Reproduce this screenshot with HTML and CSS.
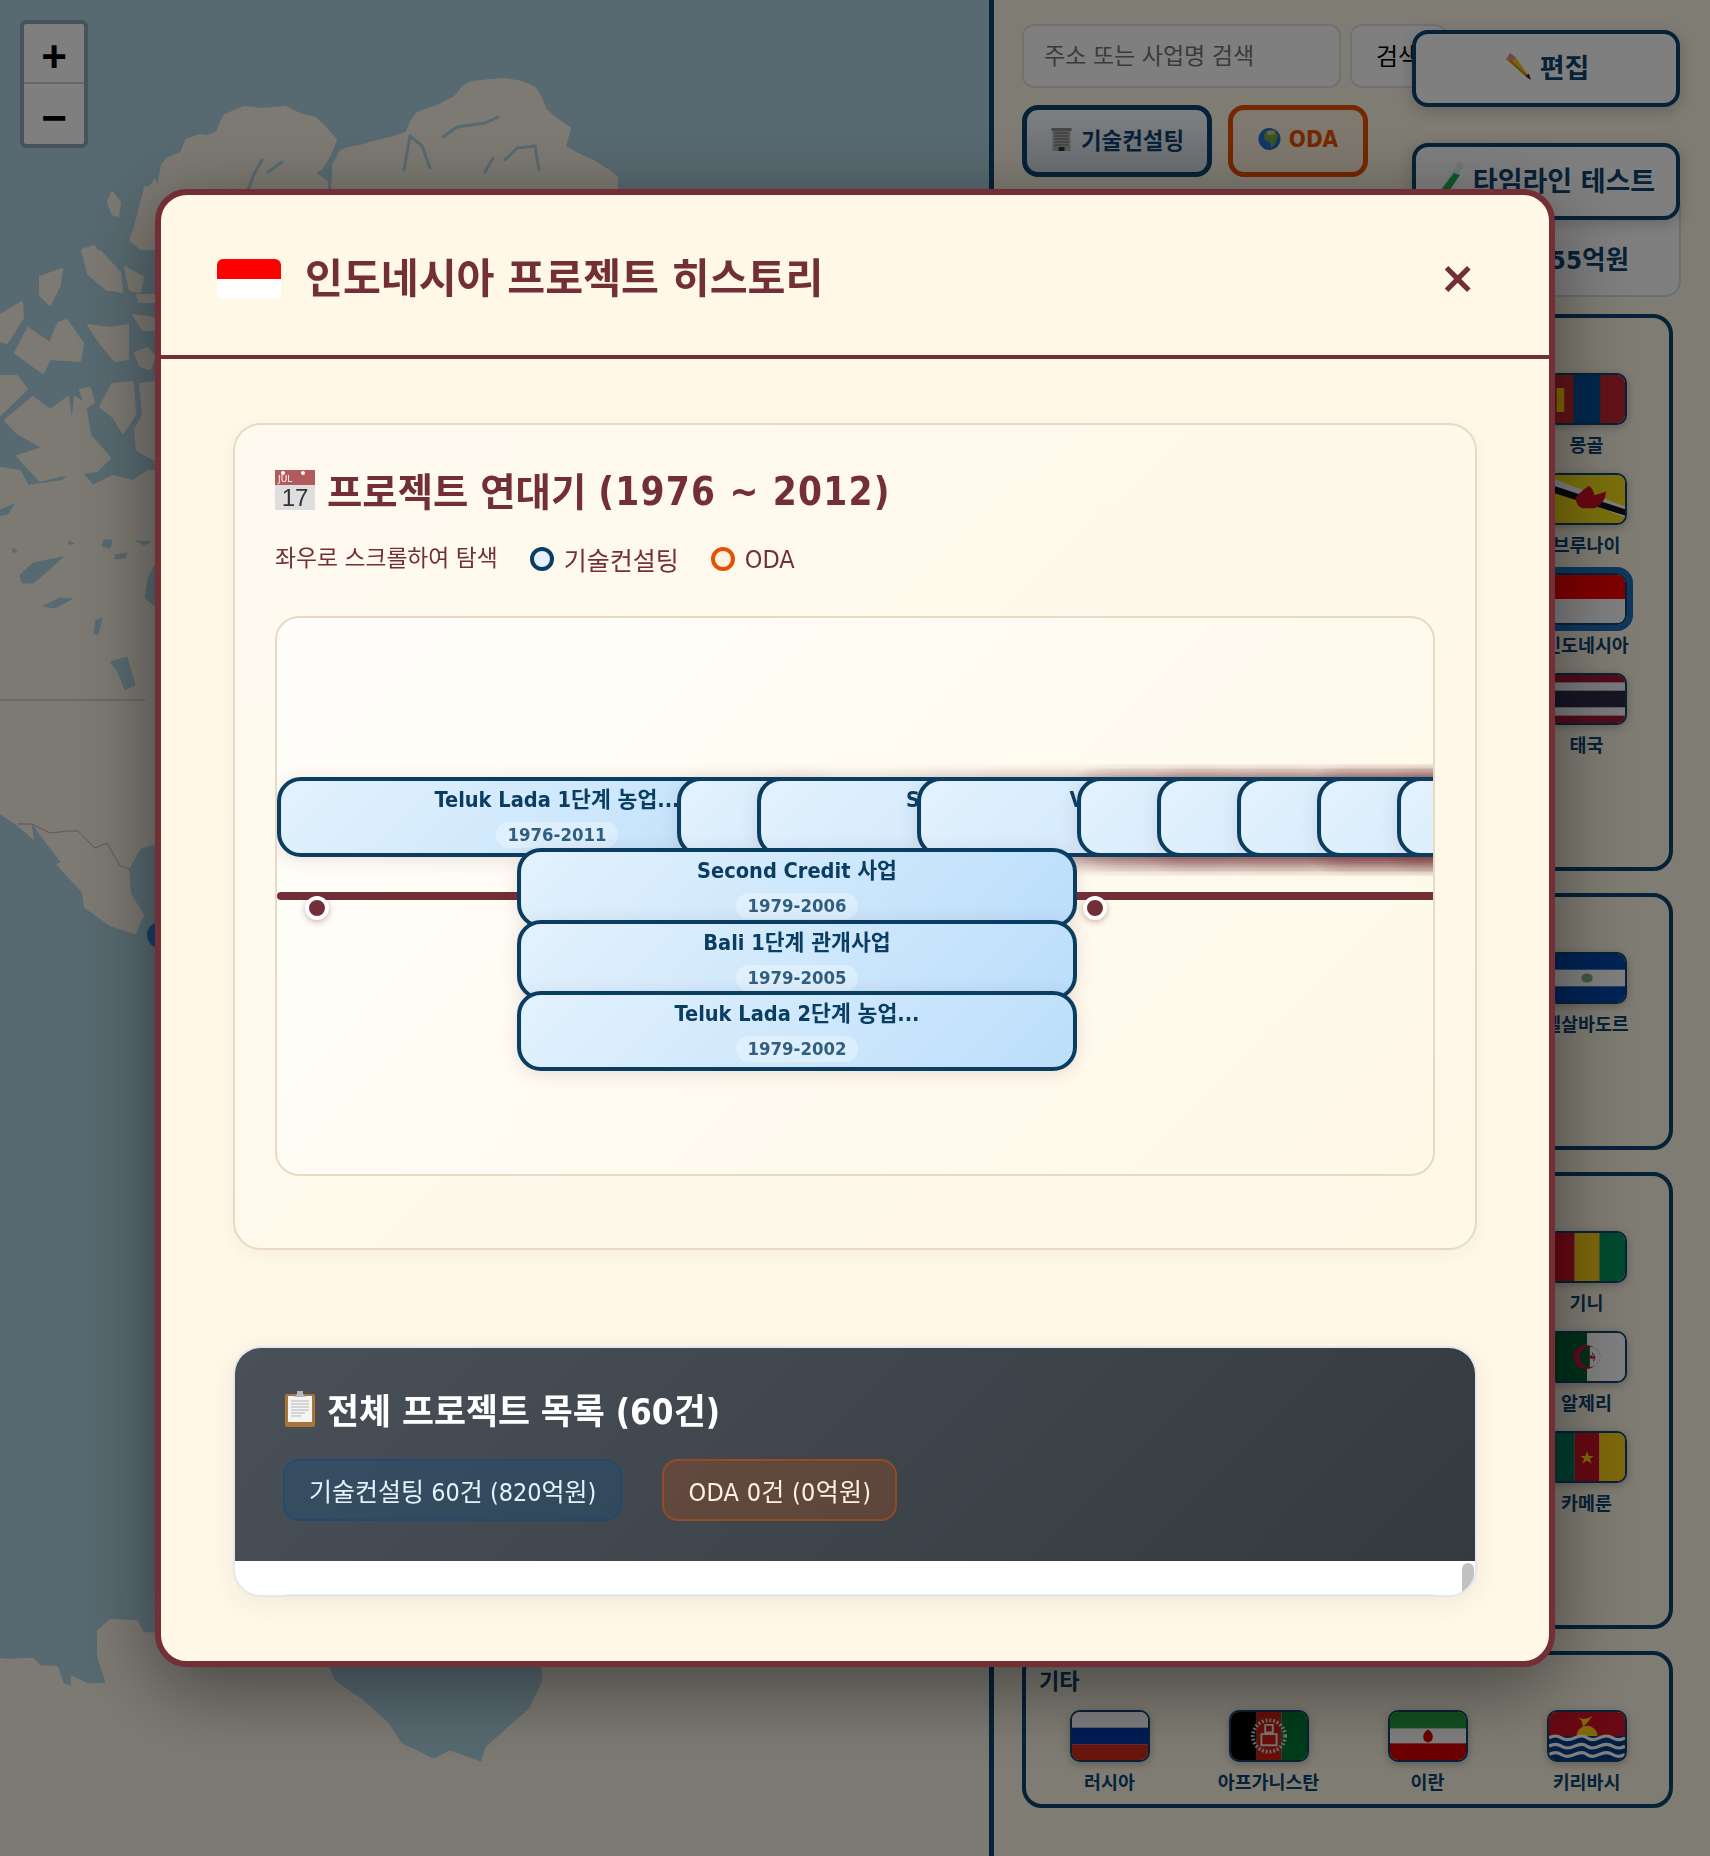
FILE: index.html
```html
<!DOCTYPE html>
<html lang="ko">
<head>
<meta charset="utf-8">
<title>인도네시아 프로젝트 히스토리</title>
<link rel="stylesheet" href="styles.css">
</head>
<body>
<div class="app">
  <div class="map">
    <svg class="map-art" viewBox="0 0 989 1856" aria-hidden="true">
      <g class="land">
        <path d="M162 165L168 158 181 153 186 140 200 135 208 136 217 132 222 120 225 115 244 107 262 109 285 107 300 114 315 118 326 128 336 140 329 157 322 168 315 173 325 180 332 187 340 230 150 230Z"/>
        <path d="M332 167L340 152 348 148 360 146 373 142 390 138 406 133 412 120 417 113 437 106 455 97 464 86 472 82 490 80 505 79 522 82 535 88 541 98 546 110 558 120 570 128 565 147 580 155 595 162 608 170 617 177 617 230 329 230Z"/>
        <path d="M145 187L165 190 165 240 156 233 142 250 130 240 140 215Z"/>
        <path d="M112 192l8 10-2 14-6-2-4-12zM82 250l12-4 12 18 14 8 2 20-18-4-18-24z"/>
        <path d="M135 226L143 195 155 180 175 249 143 249Z"/>
        <path d="M83 251L100 251 117 269 120 290 107 290 88 274Z"/>
        <path d="M40 277L62 269 60 285 50 305 40 295ZM0 315L22 302 23 318 7 343 0 341ZM15 353L28 328 50 343 58 323 67 320 83 343 80 361 50 359 43 373 33 366Z"/>
        <path d="M88 325L110 328 128 325 128 359 115 361 100 343ZM125 267L143 277 140 292 130 290ZM137 295h18v7h-16ZM133 315L155 318 155 330 143 330ZM135 353L147 348 155 356 150 369 140 366Z"/>
        <path d="M100 407L112 384 133 382 135 415 123 433 113 417ZM140 384L175 379 175 471 137 450 135 430 143 415Z"/>
        <path d="M5 420L33 397 50 410 68 397 72 425 75 397 85 404 90 435 110 458 97 471 60 476 40 481 17 456 43 448 17 433Z"/>
        <path d="M0 376L17 376 27 389 0 415ZM80 390l10-2 4 14-8 6z"/>
        <path d="M0 468L20 471 28 486 63 481 77 468 93 486 113 476 133 481 148 471 175 471 175 843 155 843 140 848 128 869 130 894 143 915 135 933 110 925 85 907 83 892 57 864 42 845 33 838 18 825 0 813Z"/>
        <path d="M0 1659L10 1660 20 1659 33 1659 40 1666 57 1667 63 1684 72 1687 72 1677 87 1684 107 1684 98 1656 98 1631 110 1620 137 1621 143 1633 175 1634 989 1634 989 1856 0 1856Z"/>
      </g>
      <g class="water">
        <path d="M20 575L33 563 63 557 43 575 33 583 22 583ZM43 606L60 598 72 599 55 608ZM145 598L148 578 155 565 175 565 175 606 155 606ZM110 662L127 657 135 685 125 690 118 672ZM96 620l6-2-4 16-4 0zM104 540l8 0-2 8-8-2zM115 555l12-2-2 5-10 1zM136 541l14 1-6 3zM13 548l4 3-4 2zM0 510l14-6-6 10-8 2zM70 541l4 3-6 0zM32 824l5 8 23 30-5 2-20-22zM330 1667L335 1680 364 1700 389 1723 402 1743 434 1758 450 1750 481 1761 485 1747 504 1730 529 1708 542 1680 539 1640 330 1640Z"/>
      </g>
      <path class="channel" d="M248 190l6-16 8-14M268 172l14-10M404 170l6-34 12 10 8 22M443 137l14-10 28-4 13-6M505 160l12-12 18-2 4 24M485 172l8-14M331 166l-2 30"/>
      <path class="border-line" d="M0 700H145M18 824H32L50 833 68 831 78 831 95 848 107 843 120 866 130 869"/>
      <circle class="marker" cx="160" cy="935" r="13"/>
    </svg>
    <div class="zoom-control">
      <div class="zoom-btn zoom-in">+</div>
      <div class="zoom-btn">−</div>
    </div>
  </div>

  <aside class="side">
    <div class="search-row">
      <div class="search-input">주소 또는 사업명 검색</div>
      <div class="search-btn">검색</div>
    </div>
    <div class="filter-row">
      <div class="filter filter-tech">
        <svg class="ico-sm" viewBox="0 0 22 24"><rect x="2" y="2" width="18" height="22" fill="#b4b4b4"/><rect x="1" y="1" width="20" height="3" fill="#8c8c8c"/><path d="M4 6h14M4 9h14M4 12h14M4 15h14M4 18h14" stroke="#6a6a6a" stroke-width="1.2"/><rect x="8" y="20" width="6" height="4" fill="#333"/></svg>
        기술컨설팅
      </div>
      <div class="filter filter-oda">
        <svg class="ico-sm" viewBox="0 0 24 24"><circle cx="12" cy="12" r="11.5" fill="#1f6fd0"/><path d="M9 3l8-1 4 6-3 9-4 5-2-7-5-2-1-5z" fill="#6ea843"/><path d="M10 4l6-1 2 4-8 1z" fill="#e3c98c"/></svg>
        ODA
      </div>
    </div>
    <div class="stat"><span class="stat-value">655억원</span></div>
    <div class="regions">
      <section class="region">
        <h3 class="region-title">아시아</h3>
        <div class="flags">
          <div class="cell col-4"><svg class="flag" viewBox="0 0 80 52" preserveAspectRatio="none"><rect width="80" height="52" fill="#c4272f"/><rect x="26" width="28" height="52" fill="#015197"/><path d="M8 14h8v26H8z" fill="#f9cf02"/></svg><span class="cell-label">몽골</span></div>
          <div class="cell col-4"><svg class="flag" viewBox="0 0 80 52" preserveAspectRatio="none"><rect width="80" height="52" fill="#f7e017"/><path d="M0 2L80 34V46L0 14Z" fill="#fff"/><path d="M0 10L80 37V44L0 18Z" fill="#111"/><path d="M28 24q10-10 14-12 4 2 6 10l12-4q0 12-12 18H36Q28 34 28 24z" fill="#cf1126"/></svg><span class="cell-label">브루나이</span></div>
          <div class="cell col-4 selected"><svg class="flag" viewBox="0 0 80 52" preserveAspectRatio="none"><rect width="80" height="26" fill="#f00"/><rect y="26" width="80" height="26" fill="#fff"/></svg><span class="cell-label">인도네시아</span></div>
          <div class="cell col-4"><svg class="flag" viewBox="0 0 80 52" preserveAspectRatio="none"><rect width="80" height="52" fill="#a51931"/><rect y="8" width="80" height="36" fill="#f4f5f8"/><rect y="17" width="80" height="18" fill="#2d2a4a"/></svg><span class="cell-label">태국</span></div>
          <div class="row-spacer"></div>
        </div>
      </section>
      <section class="region">
        <h3 class="region-title">중남미</h3>
        <div class="flags">
          <div class="cell col-4"><svg class="flag" viewBox="0 0 80 52" preserveAspectRatio="none"><rect width="80" height="52" fill="#0047ab"/><rect y="17" width="80" height="18" fill="#fff"/><ellipse cx="40" cy="26" rx="6" ry="5" fill="#7fb08a"/></svg><span class="cell-label">엘살바도르</span></div>
          <div class="row-spacer"></div>
        </div>
      </section>
      <section class="region">
        <h3 class="region-title">아프리카</h3>
        <div class="flags">
          <div class="cell col-4"><svg class="flag" viewBox="0 0 80 52" preserveAspectRatio="none"><rect width="27" height="52" fill="#ce1126"/><rect x="27" width="26" height="52" fill="#fcd116"/><rect x="53" width="27" height="52" fill="#009460"/></svg><span class="cell-label">기니</span></div>
          <div class="cell col-4"><svg class="flag" viewBox="0 0 80 52" preserveAspectRatio="none"><rect width="40" height="52" fill="#006233"/><rect x="40" width="40" height="52" fill="#fff"/><circle cx="39" cy="26" r="13" fill="#d21034"/><circle cx="43" cy="26" r="11" fill="#006233"/><path d="M43 15a11 11 0 0 1 0 22z" fill="#fff"/><path d="M40 26l8-3-2 3 2 3zM45 20l1 6 1 6 2-6z" fill="#d21034"/></svg><span class="cell-label">알제리</span></div>
          <div class="cell col-4"><svg class="flag" viewBox="0 0 80 52" preserveAspectRatio="none"><rect width="27" height="52" fill="#007a5e"/><rect x="27" width="26" height="52" fill="#ce1126"/><rect x="53" width="27" height="52" fill="#fcd116"/><path d="M40 20l2 5h5l-4 3 2 5-5-3-5 3 2-5-4-3h5z" fill="#fcd116"/></svg><span class="cell-label">카메룬</span></div>
          <div class="row-spacer"></div>
        </div>
      </section>
      <section class="region">
        <h3 class="region-title">기타</h3>
        <div class="flags">
          <div class="cell"><svg class="flag" viewBox="0 0 80 52" preserveAspectRatio="none"><rect width="80" height="17" fill="#fff"/><rect y="17" width="80" height="18" fill="#0039a6"/><rect y="35" width="80" height="17" fill="#d52b1e"/></svg><span class="cell-label">러시아</span></div>
          <div class="cell"><svg class="flag" viewBox="0 0 80 52" preserveAspectRatio="none"><rect width="27" height="52" fill="#000"/><rect x="27" width="26" height="52" fill="#d32011"/><rect x="53" width="27" height="52" fill="#007a36"/><circle cx="40" cy="26" r="17" fill="none" stroke="#ddd" stroke-width="4" stroke-dasharray="2 2"/><path d="M32 24h16v12H32zM36 14h8v8h-8z" fill="none" stroke="#eee" stroke-width="2"/></svg><span class="cell-label">아프가니스탄</span></div>
          <div class="cell"><svg class="flag" viewBox="0 0 80 52" preserveAspectRatio="none"><rect width="80" height="18" fill="#239f40"/><rect y="18" width="80" height="16" fill="#fff"/><rect y="34" width="80" height="18" fill="#da0000"/><path d="M40 19q5 3 5 8t-5 6q-5-1-5-6t5-8z" fill="#da0000"/></svg><span class="cell-label">이란</span></div>
          <div class="cell"><svg class="flag" viewBox="0 0 80 52" preserveAspectRatio="none"><rect width="80" height="52" fill="#ce1126"/><circle cx="40" cy="26" r="11" fill="#fcd116"/><path d="M30 6q8 4 16-2l-6 8-4 4-2-7z" fill="#fcd116"/><rect y="26" width="80" height="26" fill="#003f87"/><path d="M0 28q7-4 13 0t14 0 13 0 13 0 14 0 13 0M0 37q7-4 13 0t14 0 13 0 13 0 14 0 13 0M0 46q7-4 13 0t14 0 13 0 13 0 14 0 13 0" fill="none" stroke="#fff" stroke-width="3.4"/></svg><span class="cell-label">키리바시</span></div>
        </div>
      </section>
    </div>
    <div class="float-btn float-edit">
      <svg class="ico-pencil" viewBox="0 0 28 28"><path d="M7 1l5 4L27 26l-6-3L3 7z" fill="#f2c31c"/><path d="M7 1l5 4-3 4-6-2z" fill="#eb8d9a"/><path d="M21 23l4-2 2 6z" fill="#222"/><path d="M6 8l17 15" stroke="#c08a10" stroke-width="1.5"/></svg>
      편집
    </div>
    <div class="float-btn float-test">
      <svg class="ico-tube" viewBox="0 0 28 40"><path d="M22 1l5 4L8 38q-4 3-6 0t0-6z" fill="#e8eef0"/><path d="M17 13l6 2L8 37q-3 2-5 0t0-6z" fill="#1fb34a"/></svg>
      타임라인 테스트
    </div>
  </aside>

  <div class="overlay">
    <div class="modal">
      <header class="modal-head">
        <svg class="modal-flag" viewBox="0 0 64 40"><rect width="64" height="20" fill="#f00"/><rect y="20" width="64" height="20" fill="#fff"/></svg>
        <h2 class="modal-title">인도네시아 프로젝트 히스토리</h2>
        <div class="modal-close">×</div>
      </header>
      <div class="modal-body">
        <section class="chrono">
          <h3 class="chrono-title">
            <svg class="ico-cal" viewBox="0 0 40 40"><rect width="40" height="40" fill="#dedede"/><rect width="40" height="15" fill="#b25a5e"/><circle cx="8" cy="3" r="2" fill="#fff"/><circle cx="28" cy="3" r="2" fill="#fff"/><text class="cal-month" x="3" y="12">JUL</text><text class="cal-day" x="20" y="36">17</text></svg>
            <span>프로젝트 연대기 <span class="chrono-range">(1976 ~ 2012)</span></span>
          </h3>
          <div class="chrono-sub">
            <span class="hint">좌우로 스크롤하여 탐색</span>
            <span class="legend"><i class="dot dot-tech"></i>기술컨설팅</span>
            <span class="legend"><i class="dot dot-oda"></i>ODA</span>
          </div>
          <div class="timeline">
            <div class="axis"></div>
            <i class="tick" style="left:28px"></i>
            <i class="tick" style="left:806px"></i>
            <div class="bar ghost" style="left:600px;top:159px"></div>
            <div class="bar ghost" style="left:700px;top:159px"></div>
            <div class="bar ghost" style="left:800px;top:159px"></div>
            <div class="bar ghost" style="left:800px;top:159px"></div>
            <div class="bar ghost" style="left:800px;top:159px"></div>
            <div class="bar ghost" style="left:820px;top:159px"></div>
            <div class="bar ghost" style="left:840px;top:159px"></div>
            <div class="bar ghost" style="left:880px;top:159px"></div>
            <div class="bar ghost" style="left:880px;top:159px"></div>
            <div class="bar ghost" style="left:1040px;top:159px"></div>
            <div class="bar ghost" style="left:1040px;top:159px"></div>
            <div class="bar ghost" style="left:1040px;top:159px"></div>
            <div class="bar ghost" style="left:1040px;top:159px"></div>
            <div class="bar ghost" style="left:1120px;top:159px"></div>
            <div class="bar ghost" style="left:1120px;top:159px"></div>
            <div class="bar" style="left:0;top:159px"><span class="bar-name">Teluk Lada 1단계 농업...</span><span class="bar-year">1976-2011</span></div>
            <div class="bar" style="left:400px;top:159px"></div>
            <div class="bar" style="left:480px;top:159px"><span class="bar-name">S<i class="bar-rest bar-rest-s"></i></span></div>
            <div class="bar" style="left:640px;top:159px"><span class="bar-name">V<i class="bar-rest bar-rest-v"></i></span></div>
            <div class="bar" style="left:800px;top:159px"></div>
            <div class="bar" style="left:880px;top:159px"></div>
            <div class="bar" style="left:960px;top:159px"></div>
            <div class="bar" style="left:1040px;top:159px"></div>
            <div class="bar" style="left:1120px;top:159px"></div>
            <div class="bar" style="left:240px;top:230px"><span class="bar-name">Second Credit 사업</span><span class="bar-year">1979-2006</span></div>
            <div class="bar" style="left:240px;top:302px"><span class="bar-name">Bali 1단계 관개사업</span><span class="bar-year">1979-2005</span></div>
            <div class="bar" style="left:240px;top:373px"><span class="bar-name">Teluk Lada 2단계 농업...</span><span class="bar-year">1979-2002</span></div>
          </div>
        </section>
        <section class="listing">
          <div class="listing-head">
            <h3 class="listing-title">
              <svg class="ico-clip" viewBox="0 0 30 36"><rect y="3" width="30" height="33" rx="2" fill="#a9743a"/><rect x="3" y="5" width="24" height="26" fill="#f4f4f4"/><path d="M6 10h18M6 13h18M6 16h18M6 19h18M6 22h14M6 25h10" stroke="#c9c9c9" stroke-width="1.5"/><path d="M9 6l3-3V0h6v3l3 3z" fill="#b4b8bc"/></svg>
              전체 프로젝트 목록 (60건)
            </h3>
            <div class="tags">
              <span class="tag tag-tech">기술컨설팅 60건 (820억원)</span>
              <span class="tag tag-oda">ODA 0건 (0억원)</span>
            </div>
          </div>
          <div class="listing-rest"><div class="listing-edge"></div></div>
          <div class="thumb"></div>
        </section>
      </div>
    </div>
  </div>
</div>
</body>
</html>
```
FILE: styles.css
```css
* { box-sizing: border-box; }
html, body { margin: 0; padding: 0; }
body {
  font-family: "DejaVu Sans Condensed", "DejaVu Sans", "Noto Sans CJK KR", sans-serif;
  color: #0d4470;
}
h2, h3 { margin: 0; }

.app { position: relative; display: flex; width: 1710px; height: 1856px; overflow: hidden; background: #fff8e7; }

/* map */
.map { position: relative; flex: 0 0 989px; height: 100%; background: #b0d4e2; }
.map-art { display: block; width: 100%; height: 100%; }
.land { fill: #faf4e6; stroke: #faf4e6; stroke-width: 2; stroke-linejoin: round; }
.water { fill: #b0d4e2; stroke: #b0d4e2; stroke-width: 1; stroke-linejoin: round; }
.channel { fill: none; stroke: #b0d4e2; stroke-width: 3; stroke-linecap: round; stroke-linejoin: round; }
.border-line { fill: none; stroke: #c8a8b0; stroke-width: 1; }
.marker { fill: #2f83d2; }
.zoom-control {
  position: absolute; left: 20px; top: 20px; width: 68px; height: 128px;
  border: 4px solid rgba(0, 0, 0, .2); border-radius: 6px; background: #fff;
  background-clip: padding-box; overflow: hidden;
}
.zoom-btn {
  height: 60px; padding-top: 8px; display: flex; align-items: center; justify-content: center;
  font: 700 44px/1 "Liberation Sans", sans-serif; color: #000;
}
.zoom-in { border-bottom: 2px solid #ccc; }

/* side */
.side { position: relative; flex: 1; border-left: 5px solid #0d4470; padding: 24px 29px 0 28px; display: flex; flex-direction: column; }
.search-row { display: flex; gap: 9px; height: 64px; }
.search-input {
  width: 319px; border: 2px solid #e2e2e2; border-radius: 12px; background: #fff;
  padding: 0 0 4px 20px; display: flex; align-items: center; font-size: 23px; color: #757575;
}
.search-btn {
  width: 97px; border: 2px solid #e2e2e2; border-radius: 12px; background: #fff;
  padding: 0 0 4px 24px; display: flex; align-items: center; font-size: 24px; color: #000;
}
.filter-row { display: flex; gap: 16px; margin-top: 17px; height: 72px; }
.filter {
  display: flex; align-items: center; justify-content: center; gap: 8px; padding-bottom: 4px;
  border-radius: 16px; font-size: 22.4px; font-weight: 700;
}
.filter-tech { width: 190px; border: 5px solid #0d4470; background: linear-gradient(180deg, #fbfdff, #d6dfe8); }
.filter-oda { width: 140px; border: 5px solid #e65100; background: #fff0de; color: #e65100; }
.ico-sm { width: 23px; height: 24px; flex: none; }
.stat {
  margin-top: 16px; height: 104px; border: 2px solid #d4dcec; border-radius: 16px; background: #fff;
  display: flex; justify-content: flex-end; align-items: flex-end; padding: 0 50px 19px 0;
}
.stat-value { font-size: 25.6px; font-weight: 700; }
.regions { display: flex; flex-direction: column; gap: 22px; margin-top: 17px; margin-right: 8px; }
.region { border: 4px solid #0d4470; border-radius: 20px; padding: 12px 12px 10px 13px; }
.region-title { font-size: 22px; line-height: 30px; margin-bottom: 13px; }
.flags { display: grid; grid-template-columns: repeat(4, 141px); gap: 16px 18px; }
.cell { display: flex; flex-direction: column; align-items: center; height: 84px; }
.col-4 { grid-column: 4; }
.row-spacer { grid-column: 1; height: 84px; }
.flag { display: block; width: 80px; height: 52px; border: 2px solid #0d4470; border-radius: 10px; box-shadow: 0 2px 8px rgba(0, 0, 0, .25); flex: none; }
.selected .flag { box-shadow: 0 0 0 6px #1d6fb8; }
.cell-label { margin-top: 10px; font-size: 18.4px; line-height: 22px; font-weight: 700; white-space: nowrap; }

.float-btn {
  position: absolute; left: 418px; width: 268px; height: 77px; padding-bottom: 4px;
  border: 4px solid #0d4470; border-radius: 16px; background: #fff;
  display: flex; align-items: center; justify-content: center; gap: 8px;
  font-size: 27px; font-weight: 700; box-shadow: 0 4px 16px rgba(0, 0, 0, .2);
}
.float-edit { top: 30px; }
.float-test { top: 143px; }
.ico-pencil { width: 29px; height: 29px; flex: none; }
.ico-tube { width: 28px; height: 40px; flex: none; }

/* modal */
.overlay {
  position: absolute; inset: 0; display: flex; align-items: center; justify-content: center;
  background: rgba(0, 0, 0, .5); backdrop-filter: blur(.7px);
}
.modal {
  width: 1400px; height: 1478px; display: flex; flex-direction: column;
  border: 6px solid #722f37; border-radius: 32px; background: #fff8e7; overflow: hidden;
  box-shadow: 0 20px 80px rgba(0, 0, 0, .45);
}
.modal-head {
  flex: none; height: 164px; display: flex; align-items: center; gap: 24px;
  padding: 8px 73px 0 56px; border-bottom: 4px solid #722f37;
}
.modal-flag { width: 64px; height: 40px; border-radius: 6px; flex: none; }
.modal-title { flex: 1; font-size: 41.2px; line-height: 50px; color: #722f37; font-weight: 700; }
.modal-close { font: 700 44px/1 "DejaVu Sans", sans-serif; color: #722f37; margin-bottom: 2px; }
.modal-body { flex: 1; min-height: 0; padding: 64px 72px; display: flex; flex-direction: column; gap: 96px; overflow: hidden; }

.chrono {
  flex: none; height: 827px; padding: 40px 40px 0; border: 2px solid #e8d9c4; border-radius: 28px;
  background: linear-gradient(135deg, #fffaf0, #fff8e7); box-shadow: 0 4px 16px rgba(114, 47, 55, .05);
}
.chrono-title { display: flex; align-items: center; gap: 12px; height: 50px; font-size: 38.4px; font-weight: 700; color: #722f37; white-space: nowrap; }
.chrono-title span { position: relative; top: -1px; }
.chrono-range { letter-spacing: 1.2px; }
.ico-cal { width: 40px; height: 40px; flex: none; }
.cal-month { font: 400 9px "DejaVu Sans", sans-serif; fill: #fff; }
.cal-day { font: 400 24px "Liberation Sans", sans-serif; fill: #333; text-anchor: middle; }
.chrono-sub { display: flex; align-items: center; gap: 32px; margin-top: 29px; height: 32px; color: #722f37; }
.hint { font-size: 22.8px; margin-bottom: 8px; }
.legend { display: flex; align-items: center; gap: 10px; font-size: 25px; margin-bottom: 2px; }
.dot { width: 24px; height: 24px; border-radius: 50%; border: 4px solid #0a3d62; }
.dot-tech { background: #e3f2fd; }
.dot-oda { border-color: #e65100; background: #fff3e0; }

.timeline {
  position: relative; height: 560px; margin-top: 40px; border: 2px solid #e8d9c4; border-radius: 24px;
  background: linear-gradient(135deg, #fffefb, #fff8e7); overflow: hidden;
}
.axis { position: absolute; left: 0; top: 274px; width: 100%; height: 8px; background: #722f37; border-radius: 4px 0 0 4px; }
.tick { position: absolute; top: 278px; width: 24px; height: 24px; border-radius: 50%; background: #722f37; border: 4px solid #fff; box-shadow: 0 2px 6px rgba(114, 47, 55, .35); }
.bar {
  position: absolute; width: 560px; height: 80px; display: flex; flex-direction: column; align-items: center;
  padding-top: 6px; border: 4px solid #0a3d62; border-radius: 24px; color: #0a3d62;
  background: linear-gradient(135deg, #e3f2fd, #bbdefb); box-shadow: 0 3px 18px rgba(114, 47, 55, .14);
}
.bar-name { font-size: 21.6px; line-height: 26px; font-weight: 700; white-space: nowrap; }
.bar-year { margin-top: 9px; height: 26px; padding: 0 12px; border-radius: 13px; background: rgba(255, 255, 255, .4); font-size: 18.4px; line-height: 26px; font-weight: 700; opacity: .8; white-space: nowrap; }
.bar-rest { display: inline-block; }
.bar-rest-s { width: 248px; }
.bar-rest-v { width: 240px; }
.ghost { background: #e3f2fd; }

.listing { position: relative; flex: none; height: 251px; border: 2px solid #e2e8f0; border-radius: 28px; background: #fff; overflow: hidden; box-shadow: 0 6px 24px rgba(114, 47, 55, .08); }
.listing-head { height: 213px; padding: 36px 48px 0; background: linear-gradient(135deg, #495057, #343a40); }
.listing-title { display: flex; align-items: center; gap: 12px; height: 50px; font-size: 34.8px; color: #fff; font-weight: 700; white-space: nowrap; }
.ico-clip { width: 30px; height: 36px; flex: none; margin-left: 2px; }
.tags { display: flex; gap: 40px; margin-top: 25px; }
.tag { height: 62px; display: flex; align-items: center; padding: 0 24px; border: 2px solid; border-radius: 16px; font-size: 25px; white-space: nowrap; }
.tag-tech { background: rgba(15, 76, 129, .3); border-color: rgba(15, 76, 129, .45); color: #e3f2fd; }
.tag-oda { background: rgba(230, 81, 0, .2); border-color: rgba(230, 81, 0, .4); color: #fff3e0; letter-spacing: .3px; }
.listing-rest { height: 36px; padding: 33px 40px 0 50px; }
.listing-edge { height: 3px; background: #e9ecef; border-radius: 12px 12px 0 0; }
.thumb { position: absolute; right: 1px; top: 215px; width: 12px; height: 40px; border-radius: 6px; background: #c1c1c1; }
```
